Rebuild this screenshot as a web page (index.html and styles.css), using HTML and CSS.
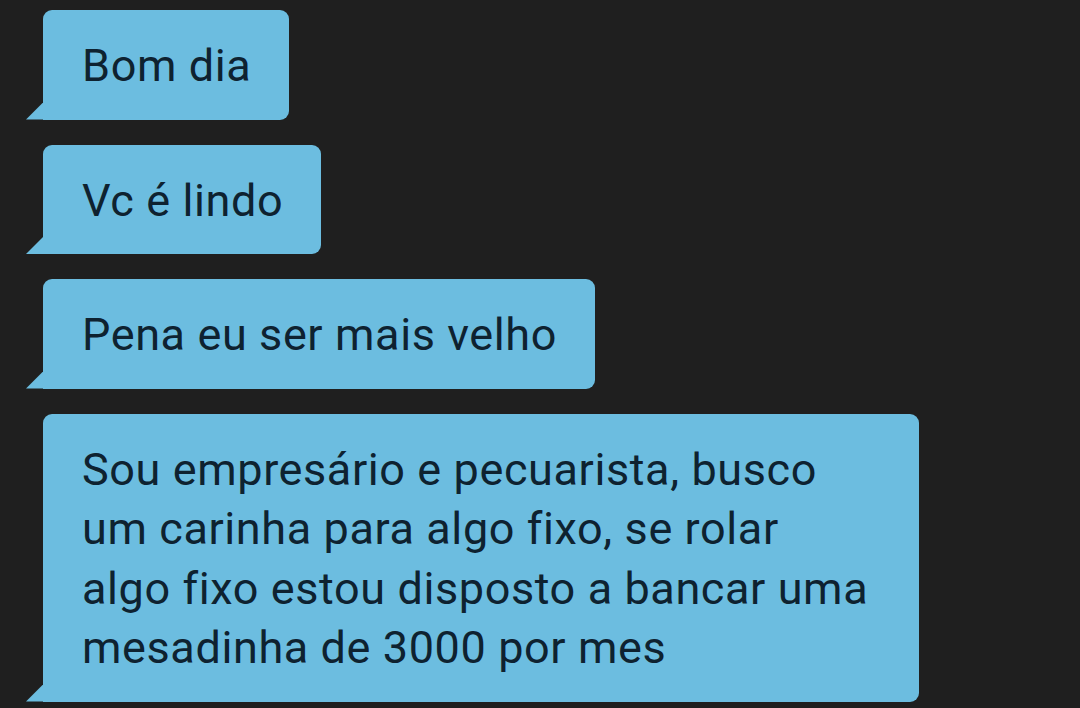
FILE: index.html
```html
<!DOCTYPE html>
<html lang="pt">
<head>
<meta charset="utf-8">
<link rel="stylesheet" href="styles.css">
</head>
<body>
<div class="thread">
  <div class="bubble">Bom dia</div>
  <div class="bubble">Vc é lindo</div>
  <div class="bubble">Pena eu ser mais velho</div>
  <div class="bubble bubble-wide">Sou empresário e pecuarista, busco<br>um carinha para algo fixo, se rolar<br>algo fixo estou disposto a bancar uma<br>mesadinha de 3000 por mes</div>
</div>
</body>
</html>
```
FILE: styles.css
```css
html, body {
  margin: 0;
  padding: 0;
  background: #1f1f1f;
  height: 100%;
  overflow: hidden;
}
.thread {
  display: flex;
  flex-direction: column;
  align-items: flex-start;
  gap: 25px;
  padding: 10px 0 0 43px;
}
.bubble {
  position: relative;
  box-sizing: border-box;
  background: #6cbde0;
  color: #0e2230;
  font-family: Roboto, "Liberation Sans", sans-serif;
  font-size: 45px;
  line-height: 59.5px;
  letter-spacing: 0.6px;
  padding: 26px 38px 24px 39px;
  border-radius: 9px 9px 9px 0;
  white-space: nowrap;
}
.bubble::before {
  content: "";
  position: absolute;
  left: -17px;
  bottom: 0;
  width: 17px;
  height: 17px;
  background: #6cbde0;
  clip-path: polygon(100% 0, 100% 100%, 0 100%);
}
.bubble-wide {
  width: 876px;
}
```
